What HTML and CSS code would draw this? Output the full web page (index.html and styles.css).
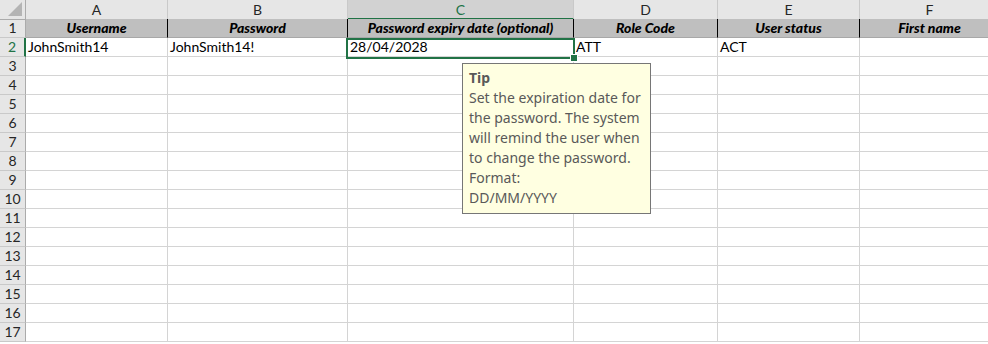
FILE: index.html
```html
<!DOCTYPE html>
<html>
<head>
<meta charset="utf-8">
<link rel="stylesheet" href="styles.css">
</head>
<body>
<div class="sheet">
  <div class="grid">
    <div class="corner"><span class="tri"></span></div>
    <div class="colhead">A</div>
    <div class="colhead">B</div>
    <div class="colhead sel">C</div>
    <div class="colhead">D</div>
    <div class="colhead">E</div>
    <div class="colhead last">F</div>

    <div class="rowhead">1</div>
    <div class="cell hdr">Username</div>
    <div class="cell hdr">Password</div>
    <div class="cell hdr">Password expiry date (optional)</div>
    <div class="cell hdr">Role Code</div>
    <div class="cell hdr">User status</div>
    <div class="cell hdr last">First name</div>

    <div class="rowhead sel">2</div>
    <div class="cell">JohnSmith14</div>
    <div class="cell">JohnSmith14!</div>
    <div class="cell">28/04/2028</div>
    <div class="cell">ATT</div>
    <div class="cell">ACT</div>
    <div class="cell last"></div>
  </div>
  <div class="grid body" id="rows"></div>
  <div class="selection"><span class="handle"></span></div>
  <div class="tip">
    <div class="tip-title">Tip</div>
    <div class="tip-text">Set the expiration date for the password. The system will remind the user when to change the password. Format:<br>DD/MM/YYYY</div>
  </div>
</div>
<script src="app.js"></script>
</body>
</html>
```

FILE: app.js
```js
var rows = document.getElementById('rows');
var html = '';
for (var r = 3; r <= 17; r++) {
  html += '<div class="rowhead">' + r + '</div>';
  for (var c = 0; c < 6; c++) {
    html += '<div class="cell' + (c === 5 ? ' last' : '') + '"></div>';
  }
}
rows.innerHTML = html;
```

FILE: styles.css
```css
html, body {
  margin: 0;
  padding: 0;
  background: #ffffff;
}
body {
  font-family: Lato, "Open Sans", sans-serif;
  font-size: 14px;
  color: #000;
  overflow: hidden;
}
.sheet {
  position: relative;
  width: 988px;
  height: 344px;
  overflow: hidden;
}
.grid {
  display: grid;
  grid-template-columns: 26px 142px 180px 226px 144px 142px 140px;
  grid-auto-rows: 19px;
}
.grid > div {
  box-sizing: border-box;
  border-right: 1px solid #d4d4d4;
  border-bottom: 1px solid #d4d4d4;
  line-height: 18px;
  white-space: nowrap;
  overflow: hidden;
}
.corner {
  position: relative;
  height: 20px;
  background: #e6e6e6;
  border-right: 1px solid #ababab !important;
  border-bottom: 1px solid #ababab !important;
}
.tri {
  position: absolute;
  right: 3px;
  bottom: 3px;
  width: 0;
  height: 0;
  border-left: 14px solid transparent;
  border-bottom: 14px solid #b4b4b4;
}
.colhead {
  height: 20px;
  background: #e6e6e6;
  text-align: center;
  color: #262626;
  line-height: 19px !important;
  border-right: 1px solid #c9c9c9 !important;
  border-bottom: 1px solid #ababab !important;
}
.colhead.sel {
  background: #d2d2d2;
  color: #217346;
  border-bottom: 2px solid #217346 !important;
}
.rowhead {
  background: #e6e6e6;
  text-align: center;
  color: #262626;
  border-right: 1px solid #ababab !important;
  border-bottom: 1px solid #c9c9c9 !important;
}
.rowhead.sel {
  color: #217346;
  border-right: 2px solid #217346 !important;
}
.cell {
  padding-left: 2px;
}
.cell.hdr {
  background: #bfbfbf;
  font-weight: 900;
  font-style: italic;
  text-align: center;
  padding-left: 0;
  border-right: 1px solid #000 !important;
  border-bottom: 1px solid #a8a8a8 !important;
}
.cell.hdr.last {
  border-right: 1px solid #bfbfbf !important;
}
.selection {
  position: absolute;
  left: 346px;
  top: 38px;
  width: 229px;
  height: 21px;
  box-sizing: border-box;
  border: 2px solid #217346;
  pointer-events: none;
}
.handle {
  position: absolute;
  right: -5px;
  bottom: -5px;
  width: 6px;
  height: 6px;
  background: #217346;
  border: 1px solid #ffffff;
}
.tip {
  position: absolute;
  left: 462px;
  top: 63px;
  width: 189px;
  height: 151px;
  box-sizing: border-box;
  background: #ffffe1;
  border: 1px solid #767676;
  padding: 4px 6px 0 6px;
  font-family: "Noto Sans", "Open Sans", sans-serif;
  font-size: 14px;
  line-height: 20px;
  color: #595959;
}
.tip-title {
  font-weight: bold;
}
```
